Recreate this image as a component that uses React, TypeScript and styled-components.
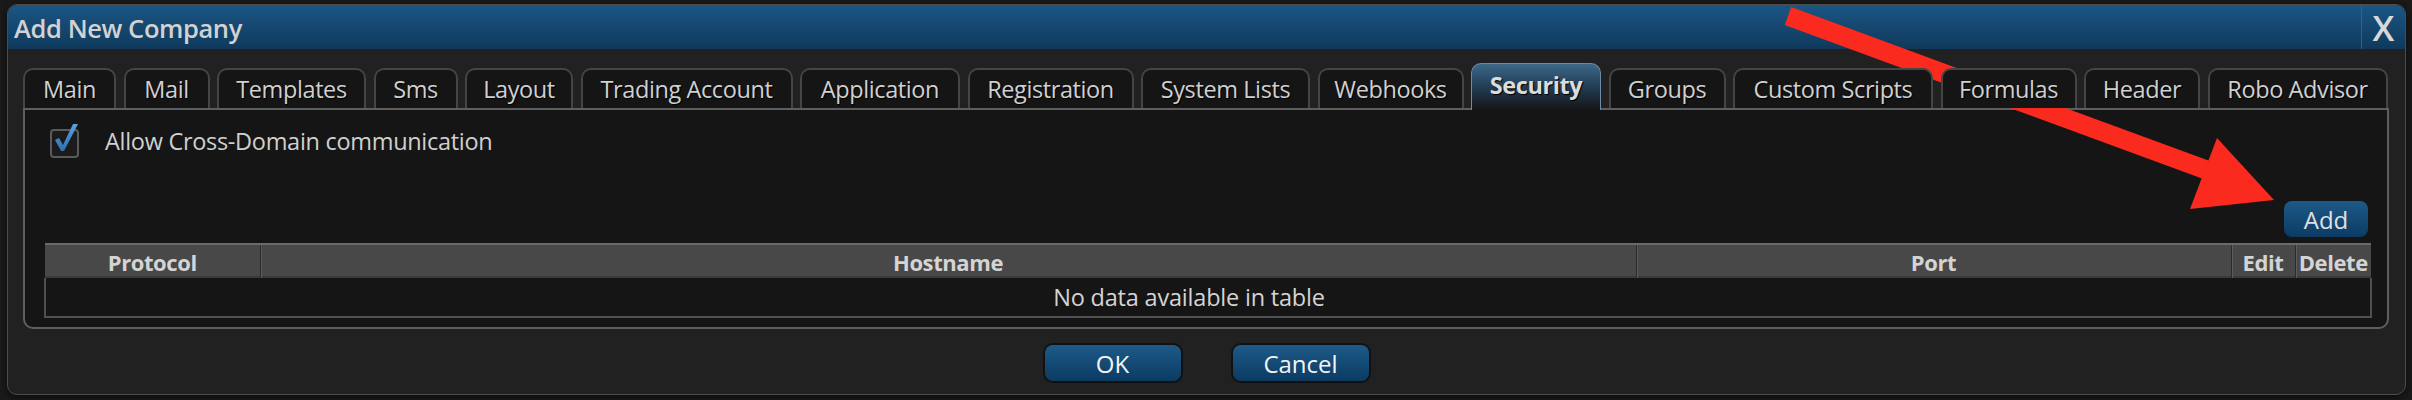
import styled, { createGlobalStyle, css } from 'styled-components';

const GlobalStyle = createGlobalStyle`
  html, body {
    margin: 0;
    padding: 0;
    background: #1a1a1a;
    font-family: "Open Sans", "Noto Sans", sans-serif;
  }
`;

const tabs = [
  { label: 'Main', width: 93 },
  { label: 'Mail', width: 86 },
  { label: 'Templates', width: 149 },
  { label: 'Sms', width: 84 },
  { label: 'Layout', width: 108 },
  { label: 'Trading Account', width: 212 },
  { label: 'Application', width: 160 },
  { label: 'Registration', width: 166 },
  { label: 'System Lists', width: 169 },
  { label: 'Webhooks', width: 146 },
  { label: 'Security', width: 130 },
  { label: 'Groups', width: 117 },
  { label: 'Custom Scripts', width: 200 },
  { label: 'Formulas', width: 136 },
  { label: 'Header', width: 116 },
  { label: 'Robo Advisor', width: 180 },
];

const columns = [
  { label: 'Protocol', width: 215 },
  { label: 'Hostname', width: 1376 },
  { label: 'Port', width: 595 },
  { label: 'Edit', width: 64 },
  { label: 'Delete', width: 76 },
];

const Page = styled.div`
  position: relative;
  width: 2412px;
  height: 400px;
  box-sizing: border-box;
  padding: 4px 6px 0 7px;
  overflow: hidden;
`;

const Dialog = styled.div`
  box-sizing: border-box;
  width: 2399px;
  height: 391px;
  display: flex;
  flex-direction: column;
  background: #212121;
  border: 1px solid #4c4c4c;
  border-radius: 10px;
  overflow: hidden;
  box-shadow: 0 2px 8px rgba(0, 0, 0, 0.6);
`;

const TitleBar = styled.div`
  height: 44px;
  flex: none;
  display: flex;
  align-items: center;
  background: linear-gradient(#1b5684, #0f395c);
`;

const Title = styled.div`
  flex: 1;
  padding-left: 6px;
  padding-top: 2px;
  font-size: 25.5px;
  font-weight: 600;
  color: #d2d2d2;
  letter-spacing: -0.4px;
`;

const CloseButton = styled.div`
  width: 43px;
  height: 100%;
  display: flex;
  align-items: center;
  justify-content: center;
  border-left: 1px solid #2a6490;
  color: #d8d8d8;
  font-size: 35px;
  font-weight: 600;
  line-height: 1;
`;

const TabRow = styled.div`
  display: flex;
  align-items: flex-end;
  gap: 7.5px;
  height: 59px;
  padding-left: 15px;
  position: relative;
  z-index: 1;
`;

const Tab = styled.div<{ $active?: boolean }>`
  box-sizing: border-box;
  flex: none;
  height: 40px;
  display: flex;
  align-items: center;
  justify-content: center;
  background: #151515;
  border: 2px solid #454545;
  border-bottom: none;
  border-radius: 10px 10px 0 0;
  color: #d0d0d0;
  font-size: 23.5px;
  letter-spacing: -0.4px;
  text-shadow: 1px 1px 1px #000;
  white-space: nowrap;

  ${(p) =>
    p.$active &&
    css`
      height: 47px;
      margin-bottom: -2px;
      padding-bottom: 4px;
      background: linear-gradient(#3e6789, #24415a 45%, #151515 100%);
      border-color: #6c8aa6;
      border-width: 1px;
      font-weight: 700;
      color: #dcdcdc;
    `}
`;

const Panel = styled.div`
  box-sizing: border-box;
  height: 221px;
  margin: 0 16px 0 15px;
  display: flex;
  flex-direction: column;
  padding: 13px 17px 9px 19px;
  background: #151515;
  border: 2px solid #5e5e5e;
  border-radius: 0 0 10px 10px;
`;

const CheckRow = styled.label`
  display: flex;
  align-items: center;
  gap: 23px;
  padding-left: 6px;
  color: #d0d0d0;
  font-size: 23.5px;
  letter-spacing: -0.3px;
`;

const AddRow = styled.div`
  margin-top: auto;
  display: flex;
  justify-content: flex-end;
  padding-right: 2px;
  margin-bottom: 6px;
`;

const BlueButton = styled.button<{ $w: number }>`
  box-sizing: border-box;
  width: ${(p) => p.$w}px;
  height: 36px;
  border: none;
  border-radius: 8px;
  background: linear-gradient(#1d5a89, #0b3b62);
  color: #e0e0e0;
  font-family: inherit;
  font-size: 24px;
  padding: 0;
  cursor: pointer;
`;

const FooterButton = styled(BlueButton)`
  box-shadow: 0 0 0 2px #111;
  color: #f4f4f4;
`;

const Table = styled.table`
  width: 100%;
  table-layout: fixed;
  border-collapse: collapse;
`;

const Th = styled.th`
  height: 33px;
  padding: 0;
  background: #484848;
  border-top: 2px solid #6a6a6a;
  border-left: 1px solid #2a2a2a;
  box-shadow: inset 1px 0 #5c5c5c, inset 0 -2px #3a3a3a;
  color: #d4d4d4;
  font-size: 22px;
  font-weight: 700;
  letter-spacing: -0.4px;
  white-space: nowrap;
  overflow: hidden;

  &:first-child {
    border-left: none;
    box-shadow: inset 0 -2px #3a3a3a;
  }
`;

const Td = styled.td`
  height: 38px;
  padding: 0 38px 0 0;
  text-align: center;
  border: 2px solid #505050;
  border-top: none;
  color: #d4d4d4;
  font-size: 23.5px;
  letter-spacing: -0.2px;
`;

const Footer = styled.div`
  flex: 1;
  display: flex;
  justify-content: center;
  align-items: flex-start;
  gap: 52px;
  padding-top: 16px;
`;

const Arrow = styled.svg`
  position: absolute;
  left: 0;
  top: 0;
  pointer-events: none;
`;

const CheckIcon = () => (
  <svg width="32" height="36" viewBox="0 0 32 36">
    <defs>
      <linearGradient id="chk" x1="0" y1="0" x2="0" y2="1">
        <stop offset="0" stopColor="#5aa2e0" />
        <stop offset="1" stopColor="#2f6fb0" />
      </linearGradient>
    </defs>
    <rect x="1" y="7" width="27" height="27" rx="3" fill="#1b1b1b" stroke="#5a5a5a" strokeWidth="2" />
    <path d="M5 17 L9 15 L13 22 L23 1 L28 1 L14 28 L11 28 Z" fill="url(#chk)" />
  </svg>
);

export default function App() {
  return (
    <Page>
      <GlobalStyle />
      <Dialog>
        <TitleBar>
          <Title>Add New Company</Title>
          <CloseButton>X</CloseButton>
        </TitleBar>
        <TabRow>
          {tabs.map((t) => (
            <Tab key={t.label} $active={t.label === 'Security'} style={{ width: t.width }}>
              {t.label}
            </Tab>
          ))}
        </TabRow>
        <Panel>
          <CheckRow>
            <CheckIcon />
            Allow Cross-Domain communication
          </CheckRow>
          <AddRow>
            <BlueButton $w={84}>Add</BlueButton>
          </AddRow>
          <Table>
            <colgroup>
              {columns.map((c) => (
                <col key={c.label} style={{ width: c.width }} />
              ))}
            </colgroup>
            <thead>
              <tr>
                {columns.map((c) => (
                  <Th key={c.label}>{c.label}</Th>
                ))}
              </tr>
            </thead>
            <tbody>
              <tr>
                <Td colSpan={5}>No data available in table</Td>
              </tr>
            </tbody>
          </Table>
        </Panel>
        <Footer>
          <FooterButton $w={136}>OK</FooterButton>
          <FooterButton $w={136}>Cancel</FooterButton>
        </Footer>
      </Dialog>
      <Arrow width="2412" height="400" viewBox="0 0 2412 400">
        <line x1="1788" y1="16" x2="2212" y2="172" stroke="#fa2a1e" strokeWidth="19" />
        <polygon points="2217,138 2190,209 2274,200" fill="#fa2a1e" />
      </Arrow>
    </Page>
  );
}
